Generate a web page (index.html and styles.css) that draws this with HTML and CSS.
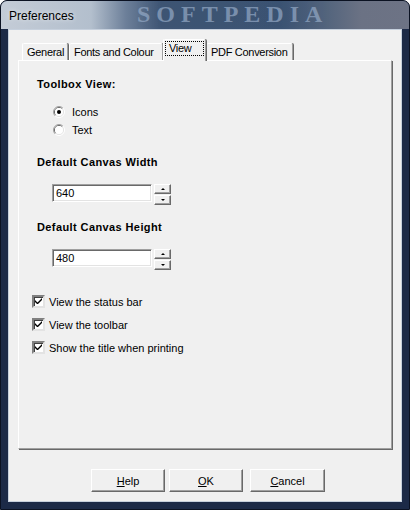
FILE: index.html
```html
<!DOCTYPE html>
<html lang="en">
<head>
    <meta charset="UTF-8">
    <title>Preferences</title>
    <link rel="stylesheet" href="styles.css">
</head>
<body>
    <div class="window">
        <!-- Glass title bar -->
        <div class="titlebar">
            <span class="title">Preferences</span>
            <span class="watermark">SOFTPEDIA</span>
        </div>

        <div class="frame">
            <div class="client">
                <!-- Tab strip -->
                <div class="tabs">
                    <div class="tab tab-general">General</div>
                    <div class="tab tab-fonts">Fonts and Colour</div>
                    <div class="tab tab-view active"><span class="focus">View</span></div>
                    <div class="tab tab-pdf">PDF Conversion</div>
                </div>

                <!-- View page -->
                <div class="panel">
                    <h3>Toolbox View:</h3>
                    <div class="radios">
                        <div class="radio-row">
                            <svg class="radio" width="12" height="12" viewBox="0 0 12 12">
                                <path d="M2.1 9.9A5.5 5.5 0 0 1 9.9 2.1" fill="none" stroke="#a0a0a0"/>
                                <path d="M9.9 2.1A5.5 5.5 0 0 1 2.1 9.9" fill="none" stroke="#ffffff"/>
                                <path d="M2.8 9.2A4.5 4.5 0 0 1 9.2 2.8" fill="none" stroke="#696969"/>
                                <path d="M9.2 2.8A4.5 4.5 0 0 1 2.8 9.2" fill="none" stroke="#e3e3e3"/>
                                <circle cx="6" cy="6" r="4" fill="#ffffff"/>
                                <circle cx="6" cy="6" r="2" fill="#000000"/>
                            </svg>
                            <span>Icons</span>
                        </div>
                        <div class="radio-row">
                            <svg class="radio" width="12" height="12" viewBox="0 0 12 12">
                                <path d="M2.1 9.9A5.5 5.5 0 0 1 9.9 2.1" fill="none" stroke="#a0a0a0"/>
                                <path d="M9.9 2.1A5.5 5.5 0 0 1 2.1 9.9" fill="none" stroke="#ffffff"/>
                                <path d="M2.8 9.2A4.5 4.5 0 0 1 9.2 2.8" fill="none" stroke="#696969"/>
                                <path d="M9.2 2.8A4.5 4.5 0 0 1 2.8 9.2" fill="none" stroke="#e3e3e3"/>
                                <circle cx="6" cy="6" r="4" fill="#ffffff"/>
                            </svg>
                            <span>Text</span>
                        </div>
                    </div>

                    <h3 class="field-label">Default Canvas Width</h3>
                    <div class="spin">
                        <div class="spin-input">640</div>
                        <div class="spin-buttons">
                            <div class="spin-btn"><span class="arrow-up"></span></div>
                            <div class="spin-btn"><span class="arrow-down"></span></div>
                        </div>
                    </div>

                    <h3 class="field-label second">Default Canvas Height</h3>
                    <div class="spin">
                        <div class="spin-input">480</div>
                        <div class="spin-buttons">
                            <div class="spin-btn"><span class="arrow-up"></span></div>
                            <div class="spin-btn"><span class="arrow-down"></span></div>
                        </div>
                    </div>

                    <div class="checks">
                        <div class="check-row">
                            <span class="checkbox"><svg width="7" height="7" viewBox="0 0 7 7"><path d="M0 2v2l2 2h1l4-4V0L2.5 4.5z" fill="#000"/></svg></span>
                            <span>View the status bar</span>
                        </div>
                        <div class="check-row">
                            <span class="checkbox"><svg width="7" height="7" viewBox="0 0 7 7"><path d="M0 2v2l2 2h1l4-4V0L2.5 4.5z" fill="#000"/></svg></span>
                            <span>View the toolbar</span>
                        </div>
                        <div class="check-row">
                            <span class="checkbox"><svg width="7" height="7" viewBox="0 0 7 7"><path d="M0 2v2l2 2h1l4-4V0L2.5 4.5z" fill="#000"/></svg></span>
                            <span>Show the title when printing</span>
                        </div>
                    </div>
                </div>

                <!-- Dialog buttons -->
                <div class="buttons">
                    <button class="btn"><u>H</u>elp</button>
                    <button class="btn ok"><u>O</u>K</button>
                    <button class="btn cancel"><u>C</u>ancel</button>
                </div>
            </div>
        </div>
    </div>
</body>
</html>
```

FILE: styles.css
```css
/* Page */
body {
    margin: 0;
    font-family: "Liberation Sans", Arial, sans-serif;
    font-size: 11px;
    color: #000;
}

/* Window frame */
.window {
    width: 410px;
    height: 510px;
    box-sizing: border-box;
    display: flex;
    flex-direction: column;
    background: #1c2a47;
    border: 1px solid #0b1222;
    border-radius: 7px 7px 0 0;
    overflow: hidden;
}

.titlebar {
    position: relative;
    height: 28px;
    flex: none;
    display: flex;
    align-items: center;
    padding-left: 8px;
    overflow: hidden;
    background: linear-gradient(to right, #c4ccd7 0, #b3bfcd 90px, #6c7f99 125px, #3e5574 160px, #3b5373 280px, #56667e 330px, #6b7284 360px, #6d7385 100%);
}

.title {
    position: relative;
    z-index: 1;
    font-size: 12px;
    padding-top: 2px;
    text-shadow: 0 0 5px rgba(255, 255, 255, 0.8);
}

/* Softpedia mark over the glass */
.watermark {
    position: absolute;
    left: 136px;
    top: 1px;
    line-height: 24px;
    font-family: "Liberation Serif", serif;
    font-weight: bold;
    font-size: 24px;
    letter-spacing: 6px;
    color: #93a9c5;
    opacity: 0.7;
}

.frame {
    flex: 1;
    display: flex;
    padding: 0 7px 7px;
}

.client {
    flex: 1;
    display: flex;
    flex-direction: column;
    background: #f0f0f0;
    border: 1px solid #c6d0dd;
    padding: 10px 9px 0 9px;
}

/* Tabs */
.tabs {
    display: flex;
    align-items: flex-end;
    height: 20px;
    padding-left: 4px;
    position: relative;
    z-index: 1;
}

.tab {
    box-sizing: border-box;
    height: 17px;
    line-height: 16px;
    padding-left: 4px;
    letter-spacing: -0.3px;
    white-space: nowrap;
    background: #f0f0f0;
    border-top: 1px solid #fff;
    border-left: 1px solid #fff;
    border-right: 1px solid #a0a0a0;
    border-radius: 2px 2px 0 0;
    box-shadow: 1px 0 0 #696969;
}

.tab-general {
    width: 46px;
    margin-right: 1px;
}

.tab-fonts {
    width: 94px;
}

.tab-view {
    width: 43px;
}

.tab-pdf {
    width: 87px;
}

.tab.active {
    height: 22px;
    line-height: 17px;
    margin-bottom: -1px;
    padding-left: 1px;
    position: relative;
}

.focus {
    display: inline-block;
    box-sizing: border-box;
    width: 39px;
    padding-left: 4px;
    line-height: 15px;
    outline: 1px dotted #000;
    outline-offset: -1px;
    margin-top: 1px;
}

/* Page panel */
.panel {
    height: 389px;
    box-sizing: border-box;
    border-top: 1px solid #fff;
    border-left: 1px solid #fff;
    border-right: 1px solid #a0a0a0;
    border-bottom: 1px solid #a0a0a0;
    box-shadow: 1px 1px 0 #696969;
    padding: 17px 0 0 18px;
}

h3 {
    margin: 0;
    font-size: 11px;
    line-height: 13px;
    font-weight: bold;
    letter-spacing: 0.4px;
}

.radios {
    margin: 12px 0 0 16px;
}

.radio-row {
    height: 18px;
    display: flex;
    align-items: center;
    gap: 7px;
}

.field-label {
    margin-top: 17px;
}

.field-label.second {
    margin-top: 16px;
}

/* Number box with spinner */
.spin {
    display: flex;
    margin: 15px 0 0 15px;
    gap: 2px;
}

.spin-input {
    width: 95px;
    height: 16px;
    line-height: 16px;
    padding-left: 3px;
    background: #fff;
    border: 1px solid;
    border-color: #a0a0a0 #fff #fff #a0a0a0;
    box-shadow: inset 1px 1px 0 #696969, inset -1px -1px 0 #e3e3e3;
}

.spin-buttons {
    display: flex;
    flex-direction: column;
    gap: 1px;
}

.spin-btn {
    width: 15px;
    height: 8px;
    background: #f0f0f0;
    border: 1px solid;
    border-color: #fff #696969 #696969 #fff;
    box-shadow: inset -1px -1px 0 #a0a0a0;
    display: flex;
    align-items: center;
    justify-content: center;
}

.arrow-up {
    border-left: 2px solid transparent;
    border-right: 2px solid transparent;
    border-bottom: 2px solid #000;
}

.arrow-down {
    border-left: 2px solid transparent;
    border-right: 2px solid transparent;
    border-top: 2px solid #000;
}

/* Check boxes */
.checks {
    margin: 20px 0 0 -5px;
}

.check-row {
    height: 23px;
    display: flex;
    align-items: center;
    gap: 4px;
}

.checkbox {
    width: 9px;
    height: 9px;
    background: #fff;
    border: 2px solid;
    border-color: #808080 #e3e3e3 #e3e3e3 #808080;
    box-shadow: inset 1px 1px 0 #404040;
    display: flex;
    align-items: center;
    justify-content: center;
}

/* Dialog buttons */
.buttons {
    display: flex;
    padding: 20px 0 0 73px;
}

.btn {
    width: 74px;
    height: 23px;
    padding: 0;
    font-family: inherit;
    font-size: 11px;
    background: #f0f0f0;
    border: 1px solid;
    border-color: #fff #696969 #696969 #fff;
    box-shadow: inset -1px -1px 0 #a0a0a0;
}

.btn.ok {
    margin-left: 4px;
}

.btn.cancel {
    margin-left: 7px;
    width: 75px;
}
```
